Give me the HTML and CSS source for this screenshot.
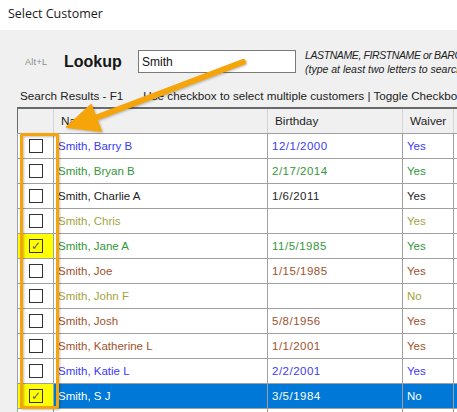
FILE: index.html
```html
<!DOCTYPE html>
<html lang="en">
<head>
    <meta charset="UTF-8">
    <title>Select Customer</title>
    <link rel="stylesheet" href="styles.css">
</head>
<body>
    <div class="window">
        <div class="titlebar">Select Customer</div>

        <div class="panel">
            <div class="lookup-row">
                <span class="hotkey">Alt+L</span>
                <span class="lookup-label">Lookup</span>
                <input class="lookup-input" type="text" value="Smith">
                <div class="hint">
                    <div class="hint-caps">LASTNAME, FIRSTNAME or BARCODE</div>
                    <div>(type at least two letters to search)</div>
                </div>
            </div>

            <div class="results-label">
                <span>Search Results - F1</span>
                <span class="results-help">Use checkbox to select multiple customers | Toggle Checkboxes</span>
            </div>

            <table class="grid">
                <thead>
                    <tr>
                        <th class="col-check"></th>
                        <th class="col-name">Name</th>
                        <th class="col-birthday">Birthday</th>
                        <th class="col-waiver">Waiver</th>
                        <th></th>
                    </tr>
                </thead>
                <tbody>
                    <tr class="blue">
                        <td class="col-check"><span class="box"></span></td>
                        <td>Smith, Barry B</td><td>12/1/2000</td><td>Yes</td><td></td>
                    </tr>
                    <tr class="green">
                        <td class="col-check"><span class="box"></span></td>
                        <td>Smith, Bryan B</td><td>2/17/2014</td><td>Yes</td><td></td>
                    </tr>
                    <tr class="black">
                        <td class="col-check"><span class="box"></span></td>
                        <td>Smith, Charlie A</td><td>1/6/2011</td><td>Yes</td><td></td>
                    </tr>
                    <tr class="olive">
                        <td class="col-check"><span class="box"></span></td>
                        <td>Smith, Chris</td><td></td><td>Yes</td><td></td>
                    </tr>
                    <tr class="green">
                        <td class="col-check checked"><span class="box">&#10003;</span></td>
                        <td>Smith, Jane A</td><td>11/5/1985</td><td>Yes</td><td></td>
                    </tr>
                    <tr class="brown">
                        <td class="col-check"><span class="box"></span></td>
                        <td>Smith, Joe</td><td>1/15/1985</td><td>Yes</td><td></td>
                    </tr>
                    <tr class="olive">
                        <td class="col-check"><span class="box"></span></td>
                        <td>Smith, John F</td><td></td><td>No</td><td></td>
                    </tr>
                    <tr class="brown">
                        <td class="col-check"><span class="box"></span></td>
                        <td>Smith, Josh</td><td>5/8/1956</td><td>Yes</td><td></td>
                    </tr>
                    <tr class="brown">
                        <td class="col-check"><span class="box"></span></td>
                        <td>Smith, Katherine L</td><td>1/1/2001</td><td>Yes</td><td></td>
                    </tr>
                    <tr class="blue">
                        <td class="col-check"><span class="box"></span></td>
                        <td>Smith, Katie L</td><td>2/2/2001</td><td>Yes</td><td></td>
                    </tr>
                    <tr class="selected">
                        <td class="col-check checked"><span class="box">&#10003;</span></td>
                        <td>Smith, S J</td><td>3/5/1984</td><td>No</td><td></td>
                    </tr>
                    <tr class="black">
                        <td class="col-check"><span class="box"></span></td>
                        <td></td><td></td><td></td><td></td>
                    </tr>
                </tbody>
            </table>
        </div>

        <!-- annotation drawn over the screenshot -->
        <svg class="markup" width="457" height="412" viewBox="0 0 457 412">
            <g class="callout">
                <rect x="21.5" y="134.5" width="36" height="273" rx="1" fill="none" stroke="#f5a50a" stroke-width="3"/>
                <line x1="243" y1="62" x2="90" y2="120" stroke="#f5a50a" stroke-width="6" stroke-linecap="round"/>
                <polygon points="67,127 91,105 101,131" fill="#f5a50a" stroke="#f5a50a" stroke-width="2" stroke-linejoin="round"/>
            </g>
        </svg>
    </div>
</body>
</html>
```

FILE: styles.css
```css
body {
    margin: 0;
    font-family: 'Liberation Sans', Arial, sans-serif;
    color: #1e1e1e;
    background: #f0f0f0;
}
.window {
    position: relative;
    width: 457px;
    height: 412px;
    overflow: hidden;
}
.titlebar {
    height: 30px;
    line-height: 28px;
    padding-left: 8px;
    background: #fff;
    font-family: 'Open Sans', 'Noto Sans', sans-serif;
    font-size: 12.5px;
    color: #1a1a1a;
}
.panel {
    background: #f0f0f0;
    padding-top: 20px;
}
.lookup-row {
    display: flex;
    align-items: center;
    height: 23px;
}
.lookup-row > * {
    flex-shrink: 0;
}
.hotkey {
    margin-left: 25px;
    width: 39px;
    font-size: 9px;
    letter-spacing: 0.3px;
    color: #8a8a8a;
}
.lookup-label {
    width: 74px;
    font-size: 16px;
    font-weight: bold;
    color: #151515;
}
.lookup-input {
    box-sizing: border-box;
    width: 158px;
    height: 23px;
    margin: 0;
    padding: 0 3px;
    border: 1px solid #7a7a7a;
    background: #fff;
    font-family: 'Liberation Sans', Arial, sans-serif;
    font-size: 12px;
    color: #111;
    outline: none;
}
.hint {
    margin-left: 9px;
    font-size: 10.5px;
    font-style: italic;
    line-height: 14px;
    white-space: nowrap;
    color: #222;
}
.hint-caps {
    letter-spacing: -0.4px;
}
.results-label {
    display: flex;
    padding: 16px 0 0 20px;
    height: 14px;
    line-height: 14px;
    margin-bottom: 4px;
    font-size: 11.7px;
    white-space: nowrap;
    color: #222;
}
.results-help {
    margin-left: 20px;
}
.grid {
    margin-left: 17px;
    border-collapse: collapse;
    table-layout: fixed;
    width: 520px;
    font-size: 11.5px;
    border-top: 2px solid #6a6a6a;
    border-left: 1px solid #6a6a6a;
}
.grid th,
.grid td {
    box-sizing: border-box;
}
.grid th {
    height: 25px;
    padding: 0 0 0 7px;
    background: #f0f0f0;
    font-weight: normal;
    font-size: 11.8px;
    text-align: left;
    color: #1e1e1e;
    border-right: 1px solid #d4d4d4;
    border-bottom: 1px solid #a0a0a0;
}
.grid td {
    height: 25px;
    padding: 0 0 0 4px;
    background: #fff;
    white-space: nowrap;
    border: 1px solid #a0a0a0;
}
.grid td:nth-child(3) {
    letter-spacing: 0.5px;
}
.grid .col-check { width: 36px; padding: 0; text-align: center; }
.grid .col-name { width: 214px; }
.grid .col-birthday { width: 135px; }
.grid .col-waiver { width: 51px; }
.box {
    display: inline-block;
    box-sizing: border-box;
    width: 14px;
    height: 14px;
    border: 1px solid #333;
    background: #fff;
    vertical-align: middle;
    font-size: 12px;
    line-height: 12px;
    color: #666;
}
.grid td.checked { background: #ffff00; }
.checked .box { background: #ffff00; }
.blue td { color: #3b3bf2; }
.green td { color: #34963a; }
.black td { color: #1e1e1e; }
.olive td { color: #a3a33e; }
.brown td { color: #a0522d; }
.selected td { background: #0078d7; color: #fff; }
.markup {
    position: absolute;
    top: 0;
    left: 0;
    pointer-events: none;
}
.callout {
    filter: drop-shadow(1px 1px 1px rgba(0, 0, 0, 0.25));
}
```
